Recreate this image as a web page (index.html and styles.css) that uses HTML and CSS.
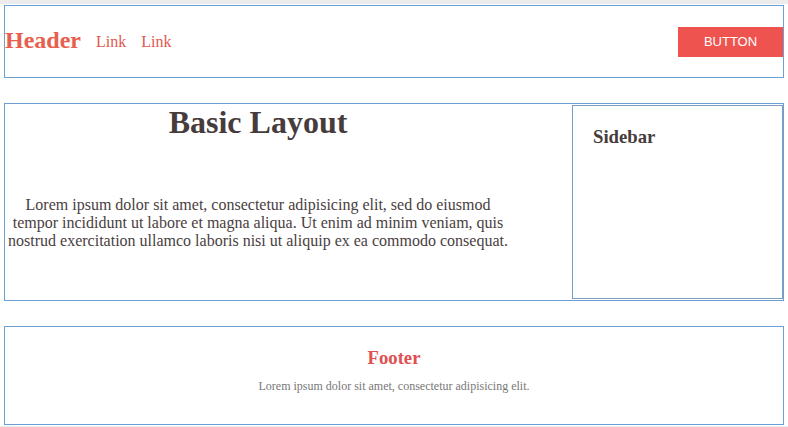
FILE: index.html
```html
<!DOCTYPE html>
<html>
<head>
<meta charset="utf-8">
<link rel="stylesheet" href="styles.css">
</head>
<body>
<div class="topstrip"></div>
<div class="page">
  <header class="header">
    <span class="brand">Header</span>
    <a class="link" href="#">Link</a>
    <a class="link" href="#">Link</a>
    <button class="btn">BUTTON</button>
  </header>
  <main class="main">
    <section class="content">
      <h1 class="title">Basic Layout</h1>
      <p class="text">Lorem ipsum dolor sit amet, consectetur adipisicing elit, sed do eiusmod tempor incididunt ut labore et magna aliqua. Ut enim ad minim veniam, quis nostrud exercitation ullamco laboris nisi ut aliquip ex ea commodo consequat.</p>
    </section>
    <aside class="sidebar">
      <h3 class="side-title">Sidebar</h3>
    </aside>
  </main>
  <footer class="footer">
    <h3 class="foot-title">Footer</h3>
    <p class="foot-text">Lorem ipsum dolor sit amet, consectetur adipisicing elit.</p>
  </footer>
</div>
<div class="bottomstrip"></div>
</body>
</html>
```

FILE: styles.css
```css
html, body {
  margin: 0;
  padding: 0;
  background: #ffffff;
  font-family: "Liberation Serif", "Times New Roman", serif;
  color: #4a4040;
  overflow: hidden;
}

.topstrip {
  height: 4px;
  background: #ececec;
}

.page {
  padding: 1px 4px 0 4px;
  display: flex;
  flex-direction: column;
  gap: 25px;
}

.header {
  height: 71px;
  border: 1px solid #6ca0d2;
  display: flex;
  align-items: center;
  padding: 0;
}

.brand {
  font-size: 24px;
  font-weight: bold;
  color: #e8604c;
  margin-right: 15px;
  margin-top: -3px;
}

.link {
  font-size: 16px;
  color: #e0574f;
  text-decoration: none;
  margin-right: 15px;
  margin-top: 1px;
}

.btn {
  margin-left: auto;
  width: 105px;
  height: 30px;
  border: none;
  background: #ef5350;
  color: #ffffff;
  font-family: "Liberation Sans", Arial, sans-serif;
  font-size: 13px;
  padding: 0;
}

.main {
  height: 196px;
  border: 1px solid #6ca0d2;
  display: flex;
}

.content {
  width: 506px;
  text-align: center;
}

.title {
  margin: 0;
  font-size: 32px;
  font-weight: bold;
  color: #473c3c;
}

.text {
  margin: 55px 0 0 0;
  font-size: 16px;
  line-height: 18px;
}

.sidebar {
  margin-left: auto;
  width: 211px;
  box-sizing: border-box;
  border: 1px solid #7f9fc0;
  border-left-color: #6ca0d2;
  padding: 20px;
  margin-top: 1px;
  margin-bottom: 1px;
}

.side-title {
  margin: 0;
  font-size: 18.72px;
  color: #473c3c;
}

.footer {
  height: 97px;
  box-sizing: content-box;
  border: 1px solid #6ca0d2;
  text-align: center;
  padding: 0;
}

.foot-title {
  margin: 20px 0 0 0;
  font-size: 18.72px;
  color: #e05050;
}

.foot-text {
  margin: 10px 0 0 0;
  font-size: 12px;
  color: #777777;
}

.bottomstrip {
  height: 10px;
  margin-top: 1px;
  background: #e6eef6;
}
```
